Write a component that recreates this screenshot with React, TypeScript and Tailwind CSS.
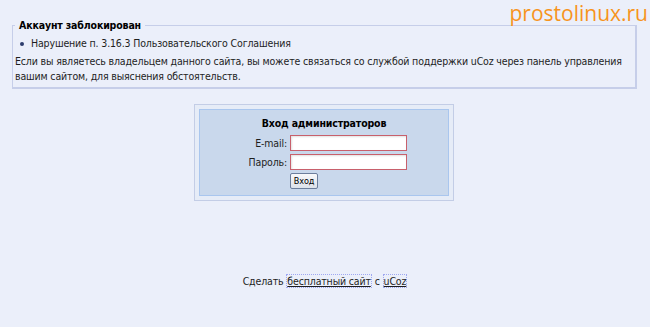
import React from "react";

export default function App() {
  const font = { fontFamily: '"DejaVu Sans Condensed", "DejaVu Sans", Verdana, sans-serif' };
  return (
    <div
      className="relative w-[650px] h-[327px] overflow-hidden bg-[#ebeffa] text-[10.5px] tracking-[-0.15px] text-[#1e1e1e]"
      style={font}
    >
      <div className="absolute right-[2px] top-[-2px] text-[21px] leading-[30px] tracking-normal text-[#f7941d]" style={{ fontFamily: '"Open Sans", sans-serif' }}>
        prostolinux.ru
      </div>

      <fieldset className="ml-[12px] mt-[18px] w-[625px] border-l border-t border-r-2 border-b-2 border-[#c6cee9] pl-[2px] pr-[2px] pb-[3px]">
        <legend className="px-[4px] font-bold leading-[14px] text-black">Аккаунт заблокирован</legend>
        <div className="mt-[4px] flex items-center leading-[15px] pl-[5px]">
          <span className="w-[4px] h-[4px] rounded-full bg-[#2c3c6c] mr-[7px]" />
          <span>Нарушение п. 3.16.3 Пользовательского Соглашения</span>
        </div>
        <p className="mt-[3px] leading-[15px]">
          Если вы являетесь владельцем данного сайта, вы можете связаться со службой поддержки uCoz через панель управления
          вашим сайтом, для выяснения обстоятельств.
        </p>
      </fieldset>

      <div className="ml-[194px] mt-[15px] w-[260px] border border-[#c3cde6] bg-[#e6ecf7] p-[4px]">
        <div className="border border-[#a9c6ee] bg-[#c9d8ec] pt-[6px] pb-[6px]">
          <div className="text-center font-bold leading-[14px] text-black">Вход администраторов</div>
          <div className="mt-[5px] grid grid-cols-[46px_117px] justify-center gap-x-[3px] gap-y-[3px]">
            <div className="text-right leading-[16px] whitespace-nowrap">E-mail:</div>
            <input className="h-[16px] w-[117px] border border-[#c8606c] bg-white shadow-[inset_1px_1px_2px_rgba(0,0,0,0.12)] outline-none" />
            <div className="text-right leading-[16px] whitespace-nowrap">Пароль:</div>
            <input className="h-[16px] w-[117px] border border-[#c8606c] bg-white shadow-[inset_1px_1px_2px_rgba(0,0,0,0.12)] outline-none" />
            <div />
            <button className="mt-[0px] h-[16px] w-[28px] rounded-[2px] border border-[#6c7e9c] bg-gradient-to-b from-[#f8f9fb] to-[#dde2ea] text-[9px] leading-[14px] text-black">
              Вход
            </button>
          </div>
        </div>
      </div>

      <div className="mt-[74px] text-center leading-[13px]">
        Сделать{" "}
        <a className="border border-dotted border-[#9fa8f0] underline text-[#1e1e1e]">бесплатный сайт</a>{" "}
        с{" "}
        <a className="border border-dotted border-[#9fa8f0] underline text-[#1e1e1e]">uCoz</a>
      </div>
    </div>
  );
}
